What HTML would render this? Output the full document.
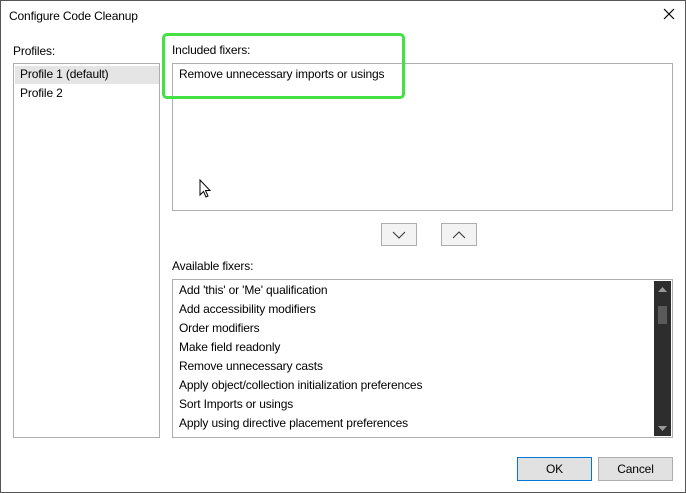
<!DOCTYPE html><html><head><style>
body{margin:0;width:686px;height:493px;background:#fff;font-family:"Liberation Sans",sans-serif;font-size:12px;color:#000;position:relative;overflow:hidden;letter-spacing:-0.15px}
.a{position:absolute}
.box{position:absolute;border:1px solid #adadad;background:#fff;box-sizing:border-box}
.it{position:absolute;left:6px;white-space:nowrap}
.btn{position:absolute;box-sizing:border-box;background:#e1e1e1;border:1px solid #adadad;text-align:center;line-height:21px}
</style></head><body>
<div class="a" style="left:0;top:0;width:686px;height:493px;border:1px solid #555;box-sizing:border-box"></div>
<div class="a" style="left:9px;top:9px;font-size:12px">Configure Code Cleanup</div>
<svg class="a" style="left:663px;top:8px" width="12" height="12"><path d="M1 1L11 11M11 1L1 11" stroke="#000" stroke-width="1.2"/></svg>
<div class="a" style="left:13px;top:44px">Profiles:</div>
<div class="box" style="left:13px;top:63px;width:147px;height:375px">
<div class="a" style="left:1px;top:2px;width:144px;height:18px;background:#e5e5e5"></div>
<div class="it" style="top:3px">Profile 1 (default)</div>
<div class="it" style="top:22px">Profile 2</div></div>
<div class="a" style="left:172px;top:43px">Included fixers:</div>
<div class="box" style="left:172px;top:63px;width:501px;height:148px">
<div class="it" style="top:3px">Remove unnecessary imports or usings</div></div>
<div class="a" style="left:162px;top:33px;width:243px;height:66px;border:3px solid #44e044;border-radius:5px;box-sizing:border-box"></div>
<svg class="a" style="left:199px;top:179px" width="14" height="20"><path d="M1 1L1 16L4.5 12.5L7 18L9 17L6.5 11.5L11 11.5Z" fill="#fff" stroke="#000" stroke-width="1"/></svg>
<div class="btn" style="left:381px;top:223px;width:36px;height:23px;background:#f3f3f3"><svg width="14" height="8" style="margin-top:7px"><path d="M1 1L7 7L13 1" fill="none" stroke="#333"/></svg></div>
<div class="btn" style="left:441px;top:223px;width:36px;height:23px;background:#f3f3f3"><svg width="14" height="8" style="margin-top:7px"><path d="M1 7L7 1L13 7" fill="none" stroke="#333"/></svg></div>
<div class="a" style="left:172px;top:259px">Available fixers:</div>
<div class="box" style="left:172px;top:279px;width:501px;height:159px">
<div class="it" style="top:3px">Add 'this' or 'Me' qualification</div>
<div class="it" style="top:22px">Add accessibility modifiers</div>
<div class="it" style="top:41px">Order modifiers</div>
<div class="it" style="top:60px">Make field readonly</div>
<div class="it" style="top:79px">Remove unnecessary casts</div>
<div class="it" style="top:98px">Apply object/collection initialization preferences</div>
<div class="it" style="top:117px">Sort Imports or usings</div>
<div class="it" style="top:136px">Apply using directive placement preferences</div>
<div class="a" style="left:481px;top:1px;width:17px;height:155px;background:#2d2d2d">
<svg class="a" style="left:4px;top:6px" width="9" height="6"><path d="M0 5L4.5 0L9 5Z" fill="#999"/></svg>
<div class="a" style="left:4px;top:25px;width:9px;height:18px;background:#5a5a5a"></div>
<svg class="a" style="left:4px;top:145px" width="9" height="6"><path d="M0 0L4.5 5L9 0Z" fill="#999"/></svg></div></div>
<div class="btn" style="left:517px;top:457px;width:75px;height:24px;border:1px solid #0078d7;line-height:22px">OK</div>
<div class="btn" style="left:598px;top:457px;width:75px;height:24px;line-height:22px">Cancel</div>
</body></html>
